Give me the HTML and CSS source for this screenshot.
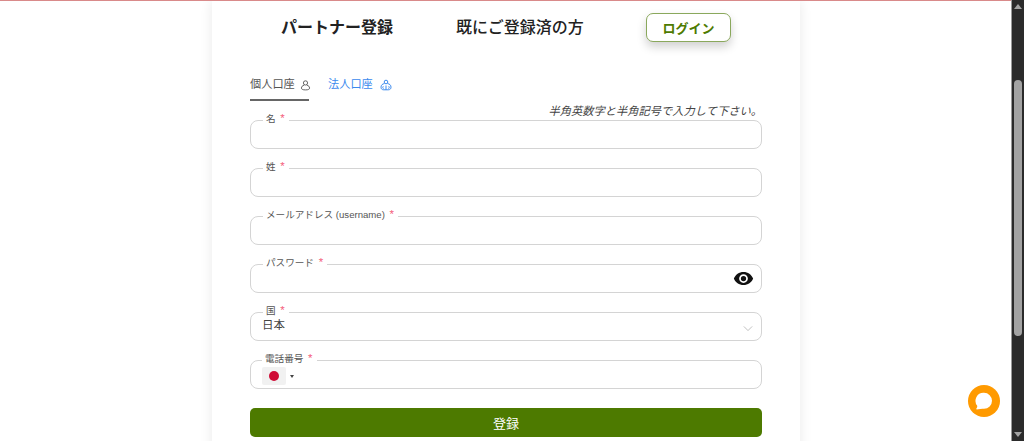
FILE: index.html
```html
<!DOCTYPE html>
<html lang="ja">
<head>
<meta charset="utf-8">
<title>パートナー登録</title>
<link rel="stylesheet" href="styles.css">
</head>
<body>
<div class="viewport">
  <main class="page">
    <section class="card">
      <header class="head">
        <h1 class="title">パートナー登録</h1>
        <h2 class="already">既にご登録済の方</h2>
        <button class="login" type="button">ログイン</button>
      </header>
      <nav class="tabs">
        <div class="tab tab-active">個人口座
          <svg class="tab-icon" viewBox="0 0 12 12" fill="none" stroke="currentColor" stroke-width="1"><circle cx="6" cy="3.2" r="2.3"/><path d="M4.6 5.6C2.6 6.2 1.6 7.2 1.6 8.8 1.6 10.2 3 10.8 6 10.8s4.4-.6 4.400-2c0-1.600-1-2.600-3-3.200"/></svg>
        </div>
        <div class="tab tab-link">法人口座
          <svg class="tab-icon tab-icon-wide" viewBox="0 0 12 12" fill="none" stroke="currentColor" stroke-width="1"><circle cx="6" cy="3" r="1.800"/><path d="M4.400 4.600C2.600 4.800 1 6 1 8.200 1 9.800 2 10.800 3.600 10.800h4.800c1.600 0 2.600-1 2.600-2.600 0-2.200-1.600-3.400-3.400-3.600M6 6.500v4.300M3.500 7.200c-1 .5-1 2.300.1 2.600M8.500 7.200c1 .5 1 2.300-.1 2.600"/></svg>
        </div>
      </nav>
      <p class="hint">半角英数字と半角記号で入力して下さい。</p>
      <form class="form">
        <fieldset class="field"><legend class="label">名 <span class="req">*</span></legend></fieldset>
        <fieldset class="field"><legend class="label">姓 <span class="req">*</span></legend></fieldset>
        <fieldset class="field"><legend class="label">メールアドレス (username) <span class="req">*</span></legend></fieldset>
        <fieldset class="field field-end"><legend class="label">パスワード <span class="req">*</span></legend>
          <svg class="eye" viewBox="0 0 24 24"><path fill="#111" d="M12 4.500C7 4.500 2.700 7.600 1 12c1.700 4.400 6 7.500 11 7.500s9.300-3.100 11-7.500c-1.700-4.400-6-7.500-11-7.500zM12 17a5 5 0 1 1 0-10 5 5 0 0 1 0 10zm0-8a3 3 0 1 0 0 6 3 3 0 0 0 0-6z"/></svg>
        </fieldset>
        <fieldset class="field field-between"><legend class="label">国 <span class="req">*</span></legend>
          <span class="value">日本</span>
          <svg class="chev" viewBox="0 0 12 8" fill="none" stroke="#b5b5b5" stroke-width="1"><path d="M1 1.500l5 5 5-5"/></svg>
        </fieldset>
        <fieldset class="field field-phone"><legend class="label">電話番号 <span class="req">*</span></legend>
          <span class="flag"><span class="flag-dot"></span></span>
          <span class="caret"></span>
        </fieldset>
        <button class="submit" type="button">登録</button>
      </form>
    </section>
    <button class="chat" type="button" aria-label="チャット">
      <svg viewBox="0 0 20 20" width="20" height="20"><path fill="#fff" d="M10 1.800a8 8 0 0 1 0 16c-1.700 0-5.800.6-7.200.6-.5 0-.7-.4-.4-.8.7-.8 1.100-1.900.7-3A8 8 0 0 1 10 1.800z"/></svg>
    </button>
  </main>
  <aside class="scrollbar">
    <span class="arrow-up"></span>
    <span class="thumb"></span>
    <span class="arrow-down"></span>
  </aside>
</div>
</body>
</html>
```
FILE: styles.css
```css
* { box-sizing: border-box; }
html, body { margin: 0; height: 100%; overflow: hidden; background: #fff; }
body {
  font-family: "Liberation Sans", "Noto Sans CJK JP", sans-serif;
  color: #333;
}
.viewport { display: flex; height: 441px; width: 1024px; }
.page {
  flex: 1;
  position: relative;
  overflow: hidden;
  border-top: 1px solid #d98a8a;
  display: flex;
  justify-content: center;
  padding-right: 2px;
}
.card {
  width: 588px;
  height: 520px;
  margin-left: 3px;
  padding: 0 38px;
  background: #fff;
  box-shadow: 0 0 12px rgba(0, 0, 0, 0.09);
}
.head { display: flex; align-items: center; height: 54px; }
.title {
  margin: 0 0 0 31px;
  width: 175px;
  font-size: 16px;
  line-height: 54px;
  font-weight: 700;
  color: #222;
}
.already {
  margin: 0;
  width: 190px;
  font-size: 16px;
  line-height: 54px;
  font-weight: 500;
  color: #222;
}
.login {
  width: 85px;
  height: 29px;
  margin-top: -1px;
  padding: 0;
  font: 700 13px "Liberation Sans", "Noto Sans CJK JP", sans-serif;
  color: #4d7a00;
  background: #fff;
  border: 1px solid #8aa85c;
  border-radius: 7px;
  box-shadow: 0 5px 10px rgba(0, 0, 0, 0.18);
}
.tabs { display: flex; gap: 19px; margin-top: 16px; height: 30px; }
.tab {
  display: flex;
  align-items: flex-start;
  gap: 5px;
  font-size: 11.200px;
  line-height: 26px;
  height: 30px;
  white-space: nowrap;
}
.tab-active { width: 59px; color: #555; border-bottom: 2px solid #666; }
.tab-link { color: #3b8aee; gap: 7px; }
.tab-icon { width: 11px; height: 11px; margin-top: 9px; flex: none; }
.tab-icon-wide { width: 12px; height: 12px; margin-top: 8px; }
.hint {
  margin: 2px 0 0;
  height: 17px;
  text-align: right;
  font-size: 11.250px;
  line-height: 16px;
  font-style: italic;
  color: #444;
}
.form { display: flex; flex-direction: column; gap: 19px; }
.field {
  margin: -7px 0 0;
  padding: 0 12px;
  height: 36px;
  min-width: 0;
  border: 1px solid #d4d4d4;
  border-radius: 8px;
  display: flex;
  align-items: center;
}
.field-end { justify-content: flex-end; padding-right: 7px; }
.field-between { justify-content: space-between; padding-right: 8px; }
.field-phone { gap: 3px; padding-left: 11px; }
.label {
  margin-left: 0;
  padding: 0 4px 2px 3px;
  font-size: 9.600px;
  line-height: 12px;
  color: #555;
}
.req { color: #f4607c; margin-left: 2px; font-size: 11.500px; line-height: 10px; }
.eye { width: 21px; height: 21px; margin-top: -3px; }
.chev { width: 10px; height: 7px; margin-top: 6px; }
.value { font-size: 11.500px; color: #444; margin-top: -3px; margin-left: -1px; }
.flag {
  width: 24px;
  height: 18px;
  background: #f1f1f1;
  border-radius: 2px;
  display: flex;
  align-items: center;
  justify-content: center;
}
.flag-dot { width: 10px; height: 10px; border-radius: 50%; background: #cf0a35; }
.caret {
  margin-left: 1px;
  border-left: 2px solid transparent;
  border-right: 2px solid transparent;
  border-top: 3px solid #444;
}
.submit {
  height: 29px;
  border: 0;
  border-radius: 5px;
  background: #4d7a00;
  color: #fff;
  font: 400 13px "Liberation Sans", "Noto Sans CJK JP", sans-serif;
}
.chat {
  position: absolute;
  left: 968px;
  top: 384px;
  width: 32px;
  height: 32px;
  padding: 0;
  border: 0;
  border-radius: 50%;
  background: #ff9a00;
  display: flex;
  align-items: center;
  justify-content: center;
}
.scrollbar {
  width: 13px;
  background: #2b2b2b;
  border-left: 1px solid #9a9a9a;
  display: flex;
  flex-direction: column;
  align-items: center;
  position: relative;
}
.arrow-up {
  margin-top: 4px;
  border-left: 4px solid transparent;
  border-right: 4px solid transparent;
  border-bottom: 5px solid #a3a3a3;
}
.thumb {
  margin-top: 71px;
  width: 8px;
  height: 256px;
  background: #a3a3a3;
  border-radius: 4px;
}
.arrow-down {
  margin-top: auto;
  margin-bottom: 4px;
  border-left: 4px solid transparent;
  border-right: 4px solid transparent;
  border-top: 5px solid #a3a3a3;
}
```
